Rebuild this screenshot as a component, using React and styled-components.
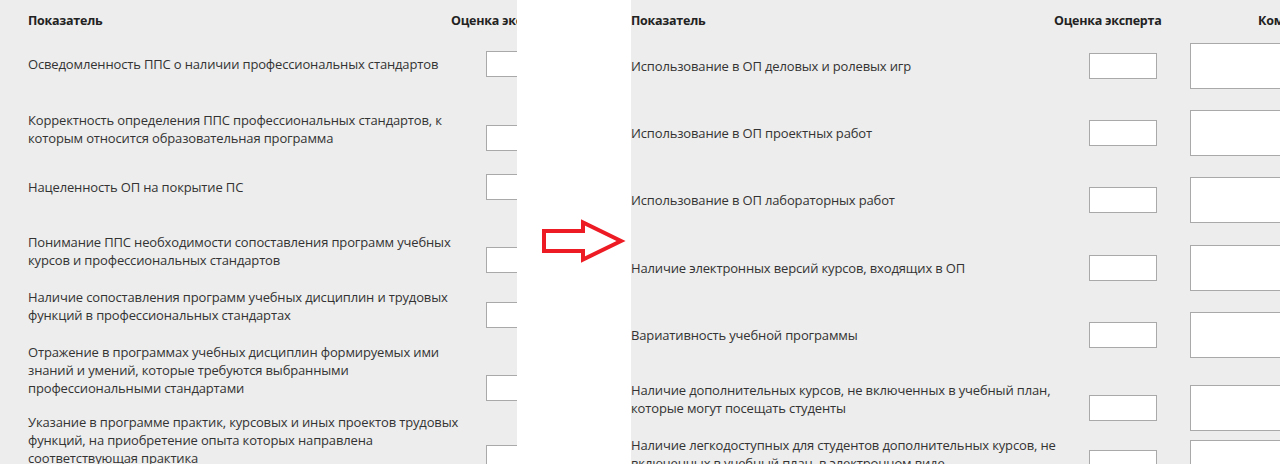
import React from 'react';
import styled, { createGlobalStyle } from 'styled-components';

const GlobalStyle = createGlobalStyle`
  html, body {
    margin: 0;
    padding: 0;
    background: #fff;
  }

  body {
    font-family: 'Open Sans', 'Noto Sans', sans-serif;
    font-size: 13px;
    letter-spacing: -0.15px;
    color: #333;
  }
`;

const Stage = styled.div`
  display: flex;
  width: 1280px;
  height: 464px;
  overflow: hidden;
  background: #fff;
`;

const Shot = styled.div`
  flex: ${(p) => (p.$width ? `0 0 ${p.$width}px` : '1 1 auto')};
  min-width: 0;
  height: 100%;
  overflow: hidden;
  background: #ededed;
  padding-left: ${(p) => p.$inset}px;
  box-sizing: border-box;
`;

const Gap = styled.div`
  flex: 0 0 112px;
  padding: 218px 0 0 24px;
  box-sizing: border-box;
`;

const Sheet = styled.div`
  width: 900px;
`;

const HeadRow = styled.div`
  display: grid;
  grid-template-columns: 423px 204px auto;
  height: 30px;
  padding-top: 12px;
  box-sizing: border-box;
  font-size: 12.5px;
  letter-spacing: -0.25px;
  font-weight: 700;
  line-height: 18px;
  color: #222;
  white-space: nowrap;
`;

const Row = styled.div`
  display: flex;
  align-items: flex-end;
  height: ${(p) => p.$h}px;
`;

const Label = styled.div`
  flex: 0 0 458px;
  min-width: 0;
  margin-bottom: 14px;
  line-height: 18px;
  white-space: pre-line;
`;

const Score = styled.input`
  flex: 0 0 68px;
  width: 68px;
  min-width: 0;
  height: 26px;
  margin: 0 33px 10px 0;
  padding: 0 4px;
  box-sizing: border-box;
  border: 1px solid #a9a9a9;
  border-radius: 0;
  background: #fff;
  font: inherit;
`;

const Comment = styled.textarea`
  flex: 0 0 250px;
  width: 250px;
  min-width: 0;
  height: 46px;
  margin: 0;
  box-sizing: border-box;
  border: 1px solid #a9a9a9;
  border-radius: 0;
  background: #fff;
  resize: none;
  font: inherit;
`;

const leftRows = [
  ['Осведомленность ППС о наличии профессиональных стандартов', 57],
  ['Корректность определения ППС профессиональных стандартов, к\nкоторым относится образовательная программа', 74],
  ['Нацеленность ОП на покрытие ПС', 49],
  ['Понимание ППС необходимости сопоставления программ учебных\nкурсов и профессиональных стандартов', 73],
  ['Наличие сопоставления программ учебных дисциплин и трудовых\nфункций в профессиональных стандартах', 55],
  ['Отражение в программах учебных дисциплин формируемых ими\nзнаний и умений, которые требуются выбранными\nпрофессиональными стандартами', 73],
  ['Указание в программе практик, курсовых и иных проектов трудовых\nфункций, на приобретение опыта которых направлена\nсоответствующая практика', 70],
];

const rightRows = [
  ['Использование в ОП деловых и ролевых игр', 59],
  ['Использование в ОП проектных работ', 67],
  ['Использование в ОП лабораторных работ', 67],
  ['Наличие электронных версий курсов, входящих в ОП', 68],
  ['Вариативность учебной программы', 67],
  ['Наличие дополнительных курсов, не включенных в учебный план,\nкоторые могут посещать студенты', 73],
  ['Наличие легкодоступных для студентов дополнительных курсов, не\nвключенных в учебный план, в электронном виде', 55],
];

const Table = ({ rows }) => (
  <Sheet>
    <HeadRow>
      <span>Показатель</span>
      <span>Оценка эксперта</span>
      <span>Комментарий</span>
    </HeadRow>
    {rows.map(([text, h]) => (
      <Row key={text} $h={h}>
        <Label>{text}</Label>
        <Score type="text" />
        <Comment />
      </Row>
    ))}
  </Sheet>
);

const Arrow = () => (
  <svg width="90" height="50" viewBox="0 0 90 50" style={{ overflow: 'visible' }}>
    <polygon
      points="3,13 42,13 42,4.5 80,23 42,41.5 42,33 3,33"
      fill="none"
      stroke="#ed1c24"
      strokeWidth="4"
    />
  </svg>
);

export default function App() {
  return (
    <>
      <GlobalStyle />
      <Stage>
        <Shot $width={517} $inset={28}>
          <Table rows={leftRows} />
        </Shot>
        <Gap>
          <Arrow />
        </Gap>
        <Shot $inset={0}>
          <Table rows={rightRows} />
        </Shot>
      </Stage>
    </>
  );
}
